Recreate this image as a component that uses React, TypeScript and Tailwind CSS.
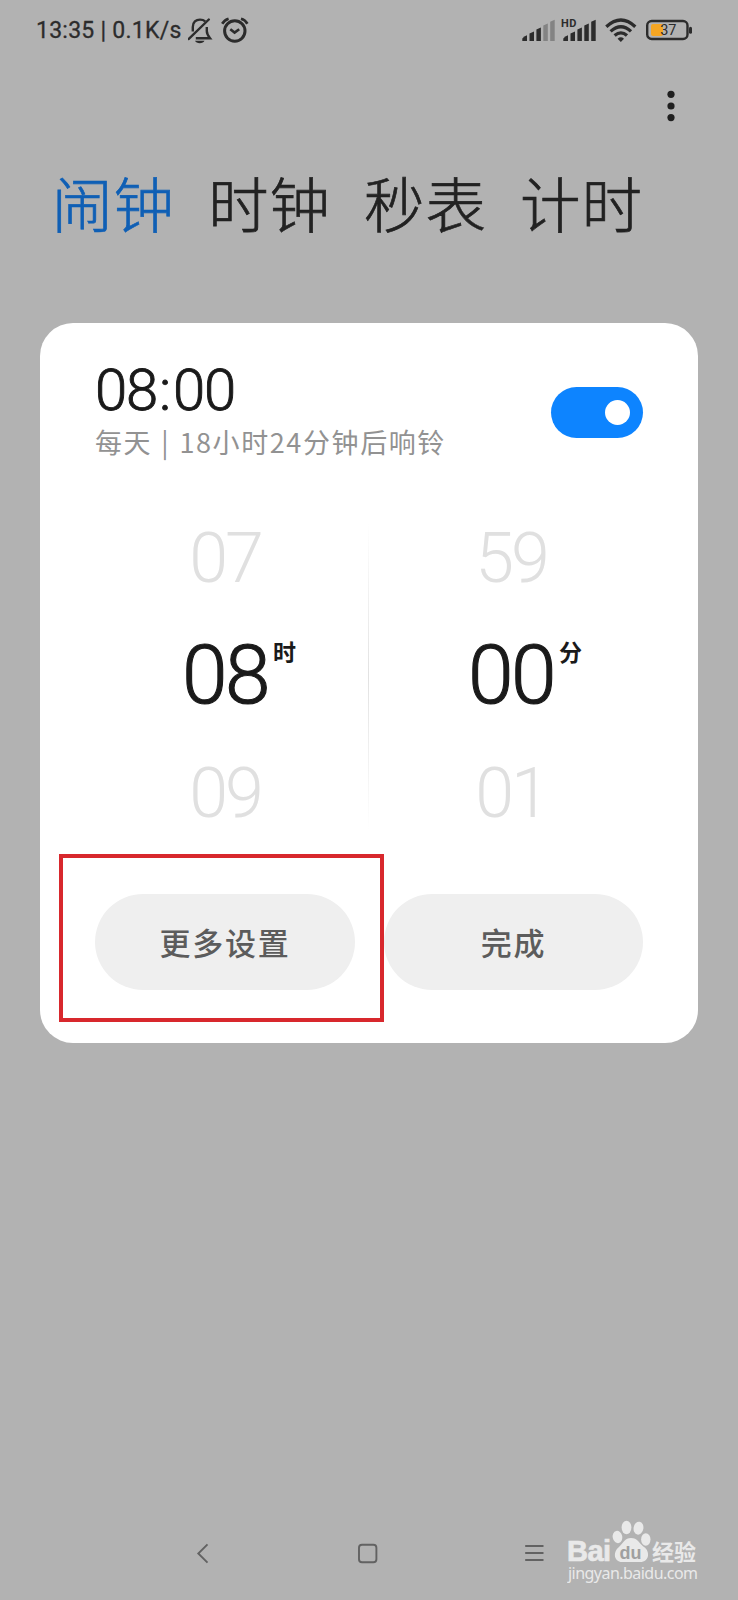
import { clsx } from 'clsx';

const TABS = ['闹钟', '时钟', '秒表', '计时'];

function StatusBar() {
  return (
    <header className="flex h-[60px] pl-[36px] text-[#2c2c2c]">
      <p className="mt-[17px] h-7 w-[152px] whitespace-pre font-['Roboto','Noto_Sans_CJK_SC',sans-serif] text-[23px] leading-7 tracking-[0.25px] [-webkit-text-stroke:0.3px_#2c2c2c]">
        13:35 | 0.1K/s
      </p>
      <svg className="mt-[16px] h-7 w-[26px]" viewBox="0 0 26 28" fill="none" stroke="currentColor" strokeWidth="2.4">
        <path d="M4.8 15.5V11C4.8 6 8 3.6 12 3.6C14.3 3.6 16 4.3 17.2 5.4M18.8 11V15C18.8 18 20.2 20 22 22.2H7.8" />
        <path d="M20.8 3.5L0.8 23" strokeLinecap="round" />
        <path d="M7 24.8H16.5C15.5 28 8 28 7 24.8Z" fill="currentColor" stroke="none" />
      </svg>
      <svg className="ml-[7px] mt-[16px] h-7 w-7" viewBox="0 0 28 28" fill="none" stroke="currentColor">
        <circle cx="13.8" cy="15" r="10.2" strokeWidth="3" />
        <path d="M1.2 7.8Q3.5 4 7.6 2.8M20 2.8Q24.2 4 26.4 7.8" strokeWidth="2.7" />
        <path d="M9.3 13.2L13.6 16.6L18.2 13.2" strokeWidth="2.6" />
      </svg>
      <div className="ml-[273px] flex">
        <svg className="mt-[16px] h-7 w-[34px]" viewBox="0 0 34 28" fill="currentColor">
          <SignalBars weak />
        </svg>
        <svg className="ml-[5px] mt-[16px] h-7 w-[36px]" viewBox="-2 0 36 28" fill="currentColor">
          <SignalBars />
          <text x="-2" y="11" fontSize="11" fontWeight="700" fontFamily="Roboto, sans-serif" letterSpacing="0.6">HD</text>
        </svg>
        <svg className="ml-[8px] mt-[16px] h-7 w-8" viewBox="0 0 32 28" fill="none" stroke="currentColor" strokeWidth="3.3">
          <path d="M1.3 10.8Q16 -2.6 30.3 10.8M5.6 15.4Q16 6 26 15.4M9.6 19.6Q16 14.2 22 19.6" />
          <path d="M12.6 22.7Q15.8 20 19 22.7L15.8 26Z" fill="currentColor" stroke="none" />
        </svg>
        <svg className="ml-[9px] mt-[16px] h-7 w-[48px]" viewBox="0 0 48 28">
          <rect x="5" y="8" width="12" height="12" rx="2" fill="#f5a623" />
          <rect x="1.2" y="5" width="40.3" height="18" rx="4.5" fill="none" stroke="#2c2c2c" strokeWidth="2.4" />
          <rect x="43" y="10.8" width="3" height="7" rx="1.5" fill="#2c2c2c" />
          <text x="22.3" y="19.3" textAnchor="middle" fontSize="14.5" fontFamily="Roboto, sans-serif" fill="#2c2c2c">37</text>
        </svg>
      </div>
    </header>
  );
}

function SignalBars({ weak = false }: { weak?: boolean }) {
  const fade = weak ? '#838383' : 'currentColor';
  return (
    <>
      <path d="M0.3 25V22.5Q2 20.2 5 19.3V25Z" />
      <path d="M7.5 25V17.5L12 15.5V25Z" />
      <path d="M14.4 25V13.5L18.9 11.5V25Z" />
      <path d="M21.3 25V9.5L25.8 7.5V25Z" fill={fade} />
      <path d="M28.2 25V5.8L32.7 3.8V25Z" fill={fade} />
    </>
  );
}

interface WheelProps {
  prev: string;
  value: string;
  next: string;
  unit: string;
}

function Wheel({ prev, value, next, unit }: WheelProps) {
  const side = "flex h-[117px] items-center text-[70px] font-light tracking-[-3px] text-[#e0e0e0]";
  return (
    <div className="flex w-[286px] flex-col items-center font-['Roboto',sans-serif] leading-none">
      <span className={side}>{prev}</span>
      <div className="relative flex h-[118px] items-center text-[82px] tracking-[-2.5px] text-[#1a1a1a]">
        <span className="font-light [-webkit-text-stroke:1.1px_#1a1a1a]">{value}</span>
        <span className="absolute left-[91px] top-[24px] font-['Noto_Sans_CJK_SC',sans-serif] text-[23px] font-bold leading-none tracking-normal">
          {unit}
        </span>
      </div>
      <span className={side}>{next}</span>
    </div>
  );
}

function AlarmDialog() {
  return (
    <section className="mx-[40px] mt-[63px] h-[720px] rounded-[33px] bg-white">
      <div className="flex h-[176px] justify-between pl-[55px] pr-[55px]">
        <div className="pt-[35px]">
          <h1 className="flex h-[64px] font-['Roboto',sans-serif] text-[58px] font-light leading-[64px] tracking-[-1.2px] text-[#1a1a1a] [-webkit-text-stroke:0.9px_#1a1a1a]">
            08<span className="ml-[2px] mr-[3px]">:</span>00
          </h1>
          <p className="mt-[2px] h-9 whitespace-pre font-['Noto_Sans_CJK_SC',sans-serif] text-[27px] leading-9 tracking-[1.6px] text-[#929292]">
            每天<span className="mx-[1.5px]"> | </span>18小时24分钟后响铃
          </p>
        </div>
        <div className="mt-[64px] flex h-[51px] w-[92px] items-center justify-end rounded-full bg-[#0d84ff] pr-[13px]">
          <div className="size-[25px] rounded-full bg-white" />
        </div>
      </div>
      <div className="flex h-[352px] justify-center pr-[2px]">
        <Wheel prev="07" value="08" next="09" unit="时" />
        <div className="-mx-[0.5px] mt-[24px] h-[307px] w-px bg-linear-to-b from-transparent via-[#e2e2e2] to-transparent" />
        <Wheel prev="59" value="00" next="01" unit="分" />
      </div>
      <div className="relative mt-[43px] flex justify-between px-[55px] font-['Noto_Sans_CJK_SC',sans-serif] text-[31px] font-medium tracking-[1.8px] text-[#5c5c5c]">
        <button className="h-[96px] w-[260px] rounded-full bg-[#efefef]">更多设置</button>
        <button className="h-[96px] w-[259px] rounded-full bg-[#efefef]">完成</button>
        <div className="absolute left-[19px] top-[-40px] h-[168px] w-[325px] border-4 border-[#d8282d]" />
      </div>
    </section>
  );
}

function Watermark() {
  return (
    <svg className="ml-[23px] h-[70px] w-[134px]" viewBox="566 1518 134 70" fill="#e9e9e9">
      <text x="566" y="1561" fontSize="29" fontWeight="700" fontFamily="'Liberation Sans', sans-serif" textLength="44" stroke="#e9e9e9" strokeWidth="0.7">Bai</text>
      <ellipse cx="616.5" cy="1537" rx="4.8" ry="6.2" transform="rotate(-12 616.5 1537)" />
      <ellipse cx="625.5" cy="1527.5" rx="4.9" ry="6.8" />
      <ellipse cx="637.5" cy="1528.2" rx="4.9" ry="6.5" transform="rotate(10 637.5 1528.2)" />
      <ellipse cx="644.8" cy="1539.5" rx="4.7" ry="6.2" />
      <path d="M630 1538C624 1538 622 1543 618 1547C611.5 1552 613 1562 621 1562H639C649 1562 649 1551 643 1547C638 1543 636.5 1538 630 1538Z" />
      <text x="618.5" y="1559" fontSize="19" fontWeight="700" fontFamily="'Liberation Sans', sans-serif" fill="#a0a0a0" textLength="22" lengthAdjust="spacingAndGlyphs">du</text>
      <text x="651" y="1559.5" fontSize="22" fontWeight="700" fontFamily="'Noto Sans CJK SC', sans-serif">经验</text>
      <text x="567" y="1579" fontSize="16" fontFamily="'Noto Sans', sans-serif" textLength="130">jingyan.baidu.com</text>
    </svg>
  );
}

export default function App() {
  return (
    <div className="flex h-[1600px] w-[738px] flex-col overflow-hidden bg-[#b2b2b2]">
      <StatusBar />
      <div className="flex h-[92px] justify-end pr-[62px] pt-[29px]">
        <svg className="h-[34px] w-[10px]" viewBox="0 0 10 34" fill="#1f1f1f">
          <circle cx="5" cy="5.3" r="3.6" />
          <circle cx="5" cy="17" r="3.6" />
          <circle cx="5" cy="28.6" r="3.6" />
        </svg>
      </div>
      <nav className="flex h-[108px] gap-[34px] pl-[52px] pt-[6px] font-['Noto_Sans_CJK_SC',sans-serif] text-[60.5px] font-light leading-[88px] [-webkit-text-stroke:0.7px_currentColor]">
        {TABS.map((tab, i) => (
          <span key={tab} className={clsx('w-[122px] whitespace-nowrap tracking-[1px]', i === 0 ? 'text-[#0f5fb5]' : 'text-[#222222]')}>
            {tab}
          </span>
        ))}
      </nav>
      <AlarmDialog />
      <footer className="mt-auto flex h-[82px] pl-[194px]">
        <svg className="mt-[22px] h-6 w-[350px]" viewBox="194 1540 350 24" fill="none" stroke="#626262" strokeWidth="1.9">
          <path d="M207.5 1544.3L198.3 1553.5L207.5 1562.7" />
          <rect x="359" y="1544.8" width="17.4" height="17.4" rx="3" />
          <path d="M525.2 1546H543.5M525.2 1553H543.5M525.2 1560H543.5" />
        </svg>
        <Watermark />
      </footer>
    </div>
  );
}
